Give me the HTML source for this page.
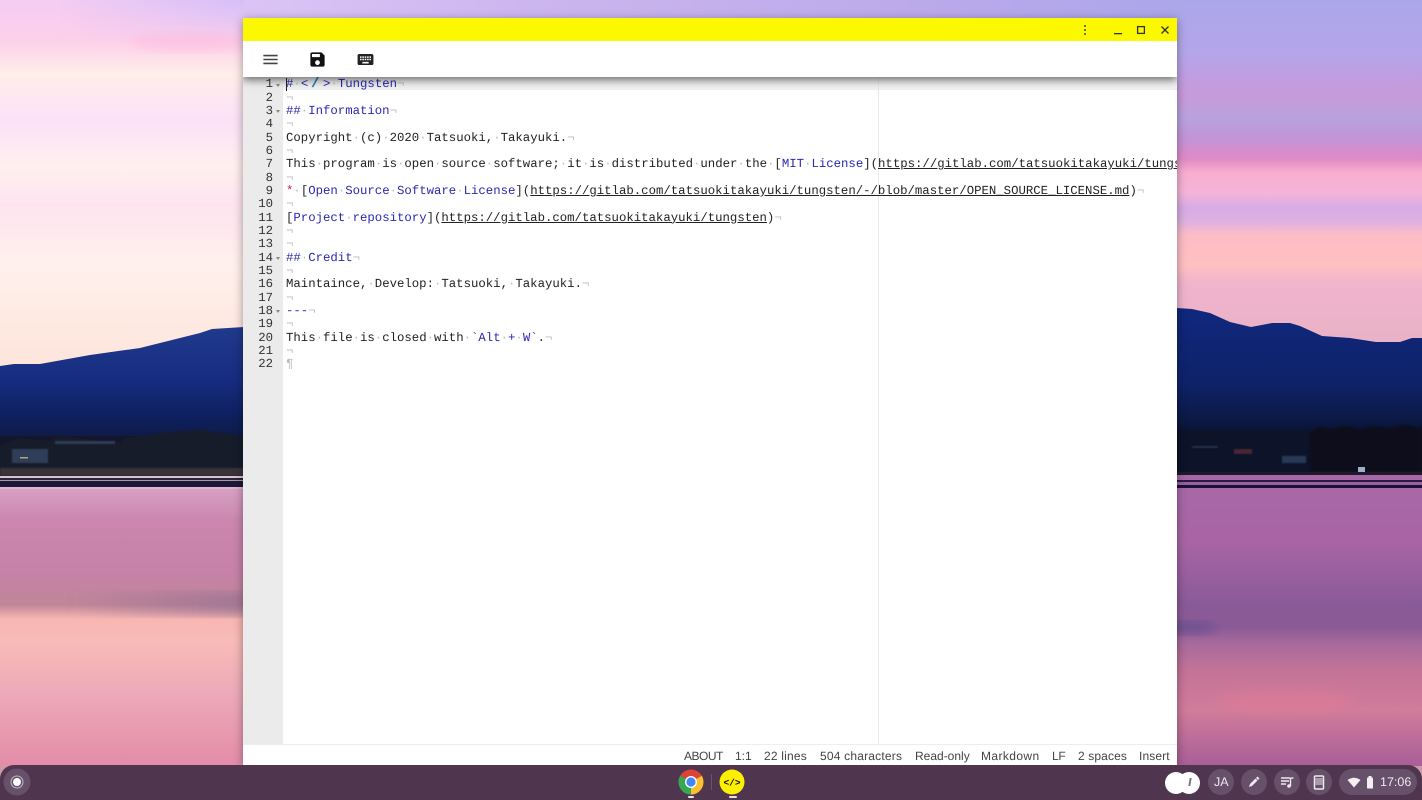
<!DOCTYPE html>
<html lang="en"><head><meta charset="utf-8"><title>Tungsten</title>
<style>
html,body{margin:0;padding:0;width:1422px;height:800px;overflow:hidden;background:#c9a}
body{position:relative;font-family:"Liberation Sans",sans-serif;text-rendering:geometricPrecision}
#wall{position:absolute;left:0;top:0}
#win{position:absolute;left:243px;top:18px;width:934px;height:747px;background:#fff;box-shadow:0 2px 9px rgba(0,0,0,.38);overflow:hidden}
#title{position:absolute;left:0;top:0;width:934px;height:23px;background:#fbf800}
#tool{position:absolute;left:0;top:23px;width:934px;height:36px;background:#fff;box-shadow:0 3px 8px rgba(0,0,0,.55);clip-path:inset(0 0 -24px 0);z-index:3}
#gutter{position:absolute;left:0;top:59px;width:40px;height:667px;background:#ebebeb}
.n{position:absolute;right:10px;width:30px;text-align:right;font:12.33px/13.333px "Liberation Mono",monospace;color:#333;margin-top:1px}
.f{position:absolute;left:33px;width:0;height:0;border-left:2.5px solid transparent;border-right:2.5px solid transparent;border-top:3px solid #888;margin-top:1px}
#margin{position:absolute;left:635px;top:59px;width:1px;height:667px;background:#e8e8e8}
#hl{position:absolute;left:40px;top:59px;width:894px;height:13px;background:rgba(0,0,0,.06)}
#code{position:absolute;left:43px;top:60.4px;font:12.33px/13.333px "Liberation Mono",monospace;color:#222;white-space:pre;z-index:1}
#code div{height:13.333px}
.d{color:#bdbdbd}.h{color:#2a2ab0}.u{text-decoration:underline;color:#222}.r{color:#c4223c}
.em{display:inline-block;width:14.8px;text-align:center;color:#2a80c0;font-weight:bold;font-size:16px;line-height:10px;vertical-align:0}
#cur{position:absolute;left:43px;top:60px;width:1px;height:13px;background:#222;z-index:2}
#status{position:absolute;left:0;top:726px;width:934px;height:21px;background:#fff;border-top:1px solid #eee;box-sizing:border-box;z-index:2}
#status span{position:absolute;top:3.5px;font-size:12px;line-height:14px;color:#444;white-space:nowrap}
#shelf{position:absolute;left:0;top:765px;width:1422px;height:35px;background:#50354f;border-radius:14px 14px 0 0}
.pill{position:absolute;top:769px;height:26px;background:#67506a;border-radius:13px}
.t{position:absolute;color:#ece6ec;font-size:12px;line-height:14px;white-space:nowrap}
svg{position:absolute;display:block}
</style></head><body>
<svg id="wall" width="1422" height="800" viewBox="0 0 1422 800">
<defs>
<linearGradient id="top" gradientUnits="userSpaceOnUse" x1="244" y1="0" x2="1177" y2="0">
<stop offset="0" stop-color="#dbc4f5"/><stop offset=".3" stop-color="#cdb6ef"/><stop offset=".7" stop-color="#bcaaea"/><stop offset="1" stop-color="#aca6ea"/>
</linearGradient>
<linearGradient id="ls" gradientUnits="userSpaceOnUse" x1="0" y1="0" x2="0" y2="370">
<stop offset="0" stop-color="#f2cdf4"/><stop offset=".04" stop-color="#f8cdf0"/><stop offset=".11" stop-color="#fdd0ea"/><stop offset=".2" stop-color="#ffeee9"/><stop offset=".33" stop-color="#fbe2f8"/><stop offset=".45" stop-color="#fff0ee"/><stop offset=".55" stop-color="#fee4f0"/><stop offset=".72" stop-color="#fff0ec"/><stop offset="1" stop-color="#fde4da"/>
</linearGradient>
<linearGradient id="lo" gradientUnits="userSpaceOnUse" x1="60" y1="0" x2="244" y2="20">
<stop offset="0" stop-color="#d4bff8" stop-opacity="0"/><stop offset="1" stop-color="#d4bff8" stop-opacity="1"/>
</linearGradient>
<linearGradient id="lof" gradientUnits="userSpaceOnUse" x1="0" y1="0" x2="0" y2="44">
<stop offset="0" stop-color="#fff" stop-opacity="1"/><stop offset="1" stop-color="#fff" stop-opacity="0"/>
</linearGradient>
<mask id="lm"><rect width="244" height="44" fill="url(#lof)"/></mask>
<linearGradient id="rs" gradientUnits="userSpaceOnUse" x1="0" y1="0" x2="0" y2="345">
<stop offset="0" stop-color="#aba6ea"/><stop offset=".15" stop-color="#b4a6e8"/><stop offset=".22" stop-color="#bf9ee2"/><stop offset=".28" stop-color="#c89ada"/><stop offset=".34" stop-color="#b8a2de"/><stop offset=".4" stop-color="#c294d8"/><stop offset=".46" stop-color="#e08ac6"/><stop offset=".5" stop-color="#f8aece"/><stop offset=".56" stop-color="#f5b4da"/><stop offset=".6" stop-color="#d8ace4"/><stop offset=".64" stop-color="#dcb0e2"/><stop offset=".68" stop-color="#fdbcc6"/><stop offset=".77" stop-color="#ffc0c2"/><stop offset=".82" stop-color="#f0b4cc"/><stop offset="1" stop-color="#eab2c6"/>
</linearGradient>
<linearGradient id="lm1" gradientUnits="userSpaceOnUse" x1="0" y1="327" x2="0" y2="445">
<stop offset="0" stop-color="#203a8c"/><stop offset=".45" stop-color="#162c80"/><stop offset=".78" stop-color="#0e1f5c"/><stop offset="1" stop-color="#101a3c"/>
</linearGradient>
<linearGradient id="rm1" gradientUnits="userSpaceOnUse" x1="0" y1="308" x2="0" y2="435">
<stop offset="0" stop-color="#10287e"/><stop offset=".6" stop-color="#0e2268"/><stop offset=".85" stop-color="#0c1a48"/><stop offset="1" stop-color="#0a1230"/>
</linearGradient>
<linearGradient id="ll" gradientUnits="userSpaceOnUse" x1="0" y1="488" x2="0" y2="766">
<stop offset="0" stop-color="#d8a0c4"/><stop offset=".12" stop-color="#cb86ae"/><stop offset=".3" stop-color="#c682a8"/><stop offset=".42" stop-color="#c08698"/><stop offset=".47" stop-color="#f8b6b2"/><stop offset=".55" stop-color="#f8bcb8"/><stop offset=".75" stop-color="#eca8b8"/><stop offset="1" stop-color="#e48ca8"/>
</linearGradient>
<linearGradient id="llo" gradientUnits="userSpaceOnUse" x1="70" y1="0" x2="244" y2="0">
<stop offset="0" stop-color="#8a6a90" stop-opacity="0"/><stop offset="1" stop-color="#8a6a90" stop-opacity=".55"/>
</linearGradient>
<linearGradient id="rl" gradientUnits="userSpaceOnUse" x1="0" y1="488" x2="0" y2="766">
<stop offset="0" stop-color="#a868a8"/><stop offset=".2" stop-color="#a864a4"/><stop offset=".42" stop-color="#8a5a98"/><stop offset=".5" stop-color="#8a5a96"/><stop offset=".56" stop-color="#a86a9c"/><stop offset=".66" stop-color="#c47498"/><stop offset=".8" stop-color="#d07c9a"/><stop offset="1" stop-color="#a85e98"/>
</linearGradient>
<filter id="b1"><feGaussianBlur stdDeviation="0.8"/></filter>
<filter id="b2"><feGaussianBlur stdDeviation="5"/></filter>
</defs>
<rect x="240" y="0" width="940" height="20" fill="url(#top)"/>
<rect x="0" y="0" width="244" height="375" fill="url(#ls)"/>
<rect x="0" y="0" width="244" height="44" fill="url(#lo)" mask="url(#lm)"/>
<ellipse cx="190" cy="42" rx="60" ry="10" fill="#fdbbe0" opacity=".55" filter="url(#b2)"/>
<rect x="1177" y="0" width="245" height="350" fill="url(#rs)"/>
<path d="M0 366L14 364 40 364 90 355 140 348 200 333 212 329 244 327V445H0Z" fill="url(#lm1)"/>
<rect x="0" y="436" width="244" height="40" fill="#13162c"/>
<path d="M0 446L20 438 50 441 60 436 120 443 126 438 170 432 200 430 244 436V476H0Z" fill="#191b2c" filter="url(#b1)"/>
<rect x="12" y="449" width="36" height="14" fill="#2e3c58" filter="url(#b1)"/>
<rect x="20" y="457" width="8" height="1.5" fill="#b8a080"/>
<rect x="55" y="441" width="60" height="3" fill="#2e3c58" filter="url(#b1)"/>
<rect x="0" y="468" width="244" height="8" fill="#3a3038" filter="url(#b1)"/>
<rect x="0" y="476" width="244" height="2" fill="#d8c4cc"/>
<rect x="0" y="478" width="244" height="2" fill="#2c2438"/>
<rect x="0" y="480" width="244" height="1" fill="#a898a8"/>
<rect x="0" y="481" width="244" height="6" fill="#1a1a38"/>
<rect x="0" y="487" width="244" height="2" fill="#e0b4cc"/>
<rect x="0" y="489" width="244" height="277" fill="url(#ll)"/>
<rect x="0" y="592" width="244" height="24" fill="url(#llo)" filter="url(#b2)"/>
<rect x="1177" y="330" width="245" height="30" fill="#eab2c6"/>
<path d="M1177 308L1192 309 1210 313 1230 322 1251 327 1272 323 1290 323 1300 326 1322 336 1350 338 1376 342 1400 342 1412 338 1422 338V440H1177Z" fill="url(#rm1)"/>
<rect x="1177" y="430" width="245" height="45" fill="#0d1328"/>
<path d="M1310 472V434L1318 427 1332 429 1345 426 1360 429 1375 426 1390 428 1405 425 1422 428V472Z" fill="#0a0e1c" filter="url(#b1)"/>
<rect x="1282" y="456" width="24" height="7" fill="#2c3858" filter="url(#b1)"/>
<rect x="1234" y="449" width="18" height="5" fill="#4a2532" filter="url(#b1)"/>
<rect x="1192" y="446" width="26" height="2" fill="#22304e" filter="url(#b1)"/>
<rect x="1358" y="467" width="7" height="5" fill="#9cb0cc"/>
<rect x="1177" y="472" width="245" height="3" fill="#1e1a2c"/>
<rect x="1177" y="475" width="245" height="5" fill="#a868a8"/>
<rect x="1177" y="480" width="245" height="2" fill="#2a1a48"/>
<rect x="1177" y="482" width="245" height="3" fill="#9a60a0"/>
<rect x="1177" y="485" width="245" height="3" fill="#1a1038"/>
<rect x="1177" y="488" width="245" height="278" fill="url(#rl)"/>
<ellipse cx="1190" cy="628" rx="26" ry="7" fill="#5c4c90" opacity=".55" filter="url(#b2)"/>
<ellipse cx="1285" cy="702" rx="70" ry="14" fill="#e87c96" opacity=".35" filter="url(#b2)"/>
</svg>

<div id="win">
<div id="title">
<svg style="left:840px;top:6px" width="4" height="12" viewBox="0 0 4 12"><circle cx="2" cy="2" r="1" fill="#444"/><circle cx="2" cy="6" r="1" fill="#444"/><circle cx="2" cy="10" r="1" fill="#444"/></svg>
<svg style="left:870px;top:6px" width="10" height="12" viewBox="0 0 10 12"><rect x="1" y="9" width="8" height="1.3" fill="#333"/></svg>
<svg style="left:893px;top:7px" width="10" height="10" viewBox="0 0 10 10"><rect x="1.6" y="1.6" width="6.8" height="6.8" fill="none" stroke="#333" stroke-width="1.3"/></svg>
<svg style="left:917px;top:7px" width="10" height="10" viewBox="0 0 10 10"><path d="M1.5 1.5L8.5 8.5M8.5 1.5L1.5 8.5" stroke="#333" stroke-width="1.3" fill="none"/></svg>
</div>
<div id="tool">
<svg style="left:18px;top:8.5px" width="19" height="19" viewBox="0 0 24 24"><path fill="#444" d="M3 18h18v-2H3v2zm0-5h18v-2H3v2zm0-7v2h18V6H3z"/></svg>
<svg style="left:65px;top:8.5px" width="19" height="19" viewBox="0 0 24 24"><path fill="#111" d="M17 3H5c-1.11 0-2 .9-2 2v14c0 1.1.89 2 2 2h14c1.1 0 2-.9 2-2V7l-4-4zm-5 16c-1.66 0-3-1.34-3-3s1.34-3 3-3 3 1.34 3 3-1.34 3-3 3zm3-10H5V5h10v4z"/></svg>
<svg style="left:112.5px;top:8.5px" width="19" height="19" viewBox="0 0 24 24"><path fill="#222" d="M20 5H4c-1.1 0-1.99.9-1.99 2L2 17c0 1.1.9 2 2 2h16c1.1 0 2-.9 2-2V7c0-1.1-.9-2-2-2zm-9 3h2v2h-2V8zm0 3h2v2h-2v-2zM8 8h2v2H8V8zm0 3h2v2H8v-2zm-1 2H5v-2h2v2zm0-3H5V8h2v2zm9 7H8v-2h8v2zm0-4h-2v-2h2v2zm0-3h-2V8h2v2zm3 3h-2v-2h2v2zm0-3h-2V8h2v2z"/></svg>
</div>
<div id="gutter">
<div class="n" style="top:.4px">1</div><div class="n" style="top:13.73px">2</div><div class="n" style="top:27.07px">3</div><div class="n" style="top:40.4px">4</div><div class="n" style="top:53.73px">5</div><div class="n" style="top:67.07px">6</div><div class="n" style="top:80.4px">7</div><div class="n" style="top:93.73px">8</div><div class="n" style="top:107.07px">9</div><div class="n" style="top:120.4px">10</div><div class="n" style="top:133.73px">11</div><div class="n" style="top:147.07px">12</div><div class="n" style="top:160.4px">13</div><div class="n" style="top:173.73px">14</div><div class="n" style="top:187.07px">15</div><div class="n" style="top:200.4px">16</div><div class="n" style="top:213.73px">17</div><div class="n" style="top:227.07px">18</div><div class="n" style="top:240.4px">19</div><div class="n" style="top:253.73px">20</div><div class="n" style="top:267.07px">21</div><div class="n" style="top:280.4px">22</div>
<i class="f" style="top:6px"></i><i class="f" style="top:32px"></i><i class="f" style="top:179px"></i><i class="f" style="top:232px"></i>
</div>
<div id="hl"></div>
<div id="margin"></div>
<div id="cur"></div>
<div id="code"><div class="h">#<span class="d">·</span>&lt;<span class="em">/</span>&gt;<span class="d">·</span>Tungsten<span class="d">¬</span></div><div class="d">¬</div><div class="h">##<span class="d">·</span>Information<span class="d">¬</span></div><div class="d">¬</div><div>Copyright<span class="d">·</span>(c)<span class="d">·</span>2020<span class="d">·</span>Tatsuoki,<span class="d">·</span>Takayuki.<span class="d">¬</span></div><div class="d">¬</div><div>This<span class="d">·</span>program<span class="d">·</span>is<span class="d">·</span>open<span class="d">·</span>source<span class="d">·</span>software;<span class="d">·</span>it<span class="d">·</span>is<span class="d">·</span>distributed<span class="d">·</span>under<span class="d">·</span>the<span class="d">·</span>[<span class="h">MIT<span class="d">·</span>License</span>](<span class="u">https://gitlab.com/tatsuokitakayuki/tungsten/-/blob/master/LICENSE</span>)<span class="d">¬</span></div><div class="d">¬</div><div><span class="r">*</span><span class="d">·</span>[<span class="h">Open<span class="d">·</span>Source<span class="d">·</span>Software<span class="d">·</span>License</span>](<span class="u">https://gitlab.com/tatsuokitakayuki/tungsten/-/blob/master/OPEN_SOURCE_LICENSE.md</span>)<span class="d">¬</span></div><div class="d">¬</div><div>[<span class="h">Project<span class="d">·</span>repository</span>](<span class="u">https://gitlab.com/tatsuokitakayuki/tungsten</span>)<span class="d">¬</span></div><div class="d">¬</div><div class="d">¬</div><div class="h">##<span class="d">·</span>Credit<span class="d">¬</span></div><div class="d">¬</div><div>Maintaince,<span class="d">·</span>Develop:<span class="d">·</span>Tatsuoki,<span class="d">·</span>Takayuki.<span class="d">¬</span></div><div class="d">¬</div><div><span class="h">---</span><span class="d">¬</span></div><div class="d">¬</div><div>This<span class="d">·</span>file<span class="d">·</span>is<span class="d">·</span>closed<span class="d">·</span>with<span class="d">·</span>`<span class="h">Alt<span class="d">·</span>+<span class="d">·</span>W</span>`.<span class="d">¬</span></div><div class="d">¬</div><div class="d">¶</div></div>
<div id="status"><span style="left:441px;letter-spacing:-.5px">ABOUT</span><span style="left:492px">1:1</span><span style="left:521px;letter-spacing:.2px">22 lines</span><span style="left:577px;letter-spacing:.2px">504 characters</span><span style="left:672px">Read-only</span><span style="left:738px;letter-spacing:.4px">Markdown</span><span style="left:809px;letter-spacing:-.3px">LF</span><span style="left:835px;letter-spacing:.12px">2 spaces</span><span style="left:896px;letter-spacing:.12px">Insert</span></div>
</div>

<div id="shelf"></div>
<svg style="left:3px;top:768px" width="28" height="28" viewBox="0 0 28 28"><circle cx="14" cy="14" r="13.5" fill="#67506a"/><circle cx="14" cy="14" r="6" fill="none" stroke="#c4bac6" stroke-width="1"/><circle cx="14" cy="14" r="4" fill="#fff"/></svg>

<svg style="left:678px;top:769px" width="26" height="26" viewBox="0 0 26 26">
<circle cx="13" cy="13" r="12.5" fill="#db4437"/>
<path d="M13 13L23.8 6.75A12.5 12.5 0 0 1 13 25.5Z" fill="#fbc02d"/>
<path d="M13 13L13 25.5A12.5 12.5 0 0 1 2.2 6.75Z" fill="#34a853"/>
<circle cx="13" cy="13" r="6" fill="#fff"/><circle cx="13" cy="13" r="4.6" fill="#4285f4"/></svg>
<div style="position:absolute;left:688px;top:796px;width:6px;height:2px;background:#e8e4e8;border-radius:1px"></div>
<div style="position:absolute;left:711px;top:774px;width:1px;height:16px;background:#6a546a"></div>
<svg style="left:719px;top:769px" width="26" height="26" viewBox="0 0 26 26"><circle cx="13" cy="13" r="12.5" fill="#fcf000"/><text x="13" y="16.5" text-anchor="middle" font-family="Liberation Mono,monospace" font-size="9.5" font-weight="bold" fill="#111">&lt;/&gt;</text></svg>
<div style="position:absolute;left:729px;top:796px;width:8px;height:2px;background:#e8e4e8;border-radius:1px"></div>

<div style="position:absolute;left:1165px;top:772px;width:22px;height:22px;background:#fff;border-radius:50%"></div>
<div style="position:absolute;left:1178px;top:772px;width:22px;height:22px;background:#fff;border-radius:50%"></div>
<div style="position:absolute;left:1189px;top:778px;width:2px;height:8px;background:#778;transform:skewX(-10deg)"></div>

<div class="pill" style="left:1208px;width:26px"></div>
<div class="t" style="left:1214px;top:775px;font-size:12.5px">JA</div>
<div class="pill" style="left:1241px;width:26px"></div>
<svg style="left:1247px;top:775px" width="14" height="14" viewBox="0 0 14 14"><path d="M2 12L3 9 8.5 3.5 10.5 5.5 5 11Z" fill="#f0eaf0"/><path d="M9 3L10.5 1.5 12.5 3.5 11 5Z" fill="#f0eaf0"/></svg>
<div class="pill" style="left:1274px;width:26px"></div>
<svg style="left:1280px;top:775px" width="14" height="14" viewBox="0 0 14 14"><path d="M1 3h9M1 6h8M1 9h5" stroke="#f0eaf0" stroke-width="1.4" fill="none"/><path d="M10.5 3v8" stroke="#f0eaf0" stroke-width="1.4"/><path d="M10.5 3h3" stroke="#f0eaf0" stroke-width="1.4"/><circle cx="9" cy="11" r="1.8" fill="#f0eaf0"/></svg>
<div class="pill" style="left:1306px;width:26px"></div>
<svg style="left:1313px;top:775px" width="12" height="15" viewBox="0 0 12 15"><rect x="1.5" y="1" width="9" height="13" rx="1" fill="none" stroke="#f0eaf0" stroke-width="1.5"/><rect x="2" y="3" width="8" height="7" fill="#a99aaa"/></svg>
<div class="pill" style="left:1339px;width:78px"></div>
<svg style="left:1347px;top:777px" width="14" height="11" viewBox="0 0 14 11"><path d="M0.5 3Q7 -1.5 13.5 3L7 10.5Z" fill="#f4eef4"/></svg>
<svg style="left:1366px;top:776px" width="8" height="13" viewBox="0 0 8 13"><rect x="2.5" y="0" width="3" height="2" fill="#f4eef4"/><rect x="1" y="1.5" width="6" height="11" rx=".8" fill="#f4eef4"/></svg>
<div class="t" style="left:1380px;top:775px;font-size:12.5px">17:06</div>
</body></html>
